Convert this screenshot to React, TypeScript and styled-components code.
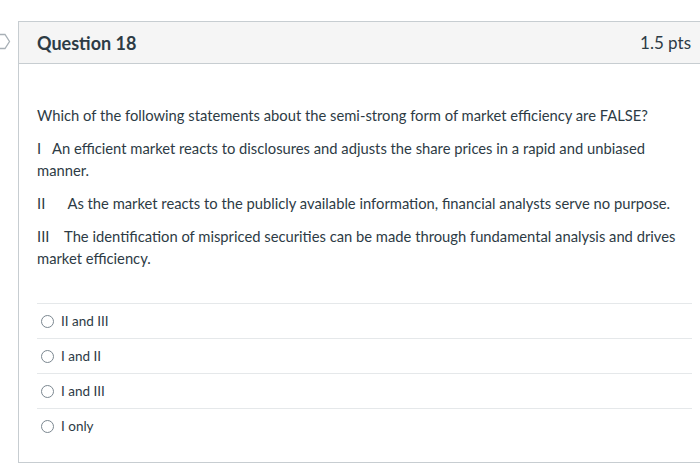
import React from "react";
import styled, { createGlobalStyle } from "styled-components";

const answers = ["II and III", "I and II", "I and III", "I only"];

const App = (): JSX.Element => {
	return (
		<>
			<GlobalStyle />
			<Page>
				<Marker>
					<svg width="18" height="60" viewBox="0 0 18 60">
						<polygon
							points="-3,13.5 5,13.5 9.5,20.5 5,27.5 -3,27.5"
							fill="#fff"
							stroke="#a8b0b6"
							strokeWidth="1.3"
						/>
					</svg>
				</Marker>
				<Card>
					<Header>
						<Title>Question 18</Title>
						<Points>1.5 pts</Points>
					</Header>
					<Body>
						<Text>
							Which of the following statements about the semi-strong form of market efficiency are FALSE?
						</Text>
						<Text>
							I&nbsp;&nbsp; An efficient market reacts to disclosures and adjusts the share prices in a rapid and unbiased
							manner.
						</Text>
						<Text>
							II&nbsp;&nbsp;&nbsp;&nbsp;&nbsp; As the market reacts to the publicly available information, financial
							analysts serve no purpose.
						</Text>
						<Text>
							III&nbsp;&nbsp;&nbsp; The identification of mispriced securities can be made through fundamental analysis
							and drives market efficiency.
						</Text>
						<Answers>
							{answers.map((answer) => (
								<Answer key={answer}>
									<Radio />
									<Label>{answer}</Label>
								</Answer>
							))}
						</Answers>
					</Body>
				</Card>
			</Page>
		</>
	);
};

export default App;

const GlobalStyle = createGlobalStyle`
	html, body {
		margin: 0;
		padding: 0;
		background: #fff;
		overflow: hidden;
	}

	body {
		font-family: Lato, "Liberation Sans", sans-serif;
		color: #2d3b45;
	}
`;

const Page = styled.div`
	display: flex;
	align-items: flex-start;
	width: 720px;
	padding-top: 21px;
`;

const Marker = styled.div`
	width: 18px;
	flex-shrink: 0;
	line-height: 0;
`;

const Card = styled.div`
	width: 692px;
	flex-shrink: 0;
	border: 1px solid #c7cdd1;
	border-right: none;
`;

const Header = styled.div`
	display: flex;
	align-items: center;
	justify-content: space-between;
	height: 41px;
	padding: 0 20px 0 18px;
	background: #f5f5f5;
	border-bottom: 1px solid #c7cdd1;
`;

const Title = styled.h2`
	margin: 0;
	font-size: 18px;
	font-weight: 700;
	color: #2d3b45;
`;

const Points = styled.div`
	font-size: 17px;
	color: #2d3b45;
`;

const Body = styled.div`
	padding: 40px 19px 19px 18px;
`;

const Text = styled.p`
	margin: 0 0 10.5px;
	font-size: 14.75px;
	line-height: 22.3px;
`;

const Answers = styled.div`
	margin-top: 34px;
`;

const Answer = styled.label`
	display: flex;
	align-items: center;
	height: 34px;
	border-top: 1px solid #e5e8ea;
	padding-left: 4px;
`;

const Radio = styled.span`
	width: 11px;
	height: 11px;
	border-radius: 50%;
	border: 1px solid #7b8790;
	background: #fff;
	margin-right: 7px;
`;

const Label = styled.span`
	font-size: 13.5px;
`;
